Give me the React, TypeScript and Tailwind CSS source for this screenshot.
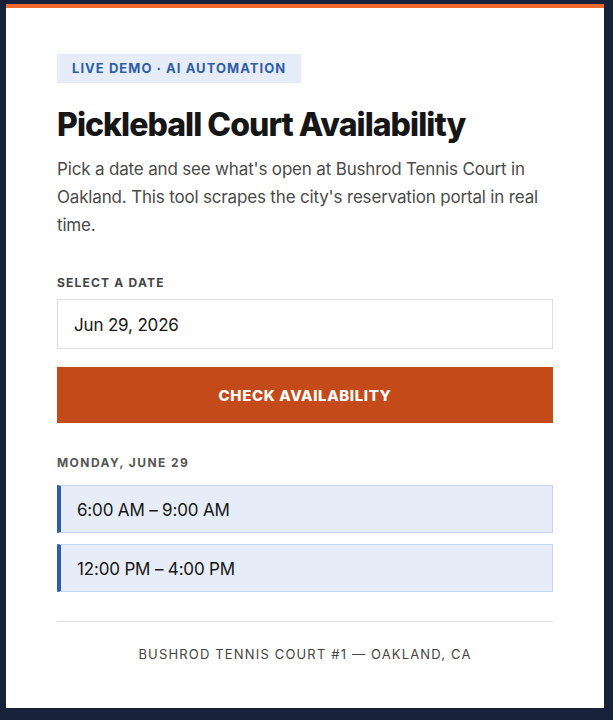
import React, { useState } from 'react';

const slots = ['6:00 AM – 9:00 AM', '12:00 PM – 4:00 PM'];

const App: React.FC = () => {
  const [date] = useState('Jun 29, 2026');

  return (
    <div className="min-h-screen bg-[#18213a] pt-[4px] pl-[6px] pr-[9px] pb-[12px] font-['Inter',sans-serif]">
      <div className="bg-white border-t-4 border-[#ee6a2d] px-[51px] pt-[46px] pb-[45px]">
        <span className="inline-block bg-[#e7edf8] px-[15px] py-[6px] text-[13px] leading-[17px] font-bold tracking-[0.08em] text-[#2e5ea8]">
          LIVE DEMO · AI AUTOMATION
        </span>

        <h1 className="mt-[22px] text-[32px] leading-[40px] font-extrabold tracking-[-0.03em] text-[#161616]">
          Pickleball Court Availability
        </h1>
        <p className="mt-[10px] text-[17px] leading-[28px] tracking-[-0.01em] text-[#4a4a4a]">
          Pick a date and see what's open at Bushrod Tennis Court in Oakland. This tool scrapes the city's
          reservation portal in real time.
        </p>

        <label className="block mt-[36px] text-[12px] leading-[16px] font-bold tracking-[0.1em] text-[#444]">
          SELECT A DATE
        </label>
        <div className="mt-[8px] h-[50px] border border-[#dcdcdc] flex items-center px-[16px] pt-[3px] text-[17px] tracking-[-0.01em] text-[#161616]">
          {date}
        </div>

        <button className="mt-[18px] w-full h-[56px] pt-[3px] bg-[#c44a19] text-white text-[15px] font-extrabold tracking-[0.04em]">
          CHECK AVAILABILITY
        </button>

        <div className="mt-[32px] text-[12px] leading-[16px] font-bold tracking-[0.12em] text-[#555]">
          MONDAY, JUNE 29
        </div>
        <div className="mt-[14px] flex flex-col gap-[11px]">
          {slots.map((s) => (
            <div
              key={s}
              className="h-[48px] flex items-center bg-[#e6edf8] border border-[#c3d4ee] border-l-4 border-l-[#2e5ea8] pl-[16px] pt-[3px] text-[17px] tracking-[-0.01em] text-[#161616]"
            >
              {s}
            </div>
          ))}
        </div>

        <div className="mt-[29px] border-t border-[#dedede] pt-[23px] text-center text-[13px] leading-[18px] tracking-[0.09em] text-[#444]">
          BUSHROD TENNIS COURT #1 — OAKLAND, CA
        </div>
      </div>
    </div>
  );
};

export default App;
